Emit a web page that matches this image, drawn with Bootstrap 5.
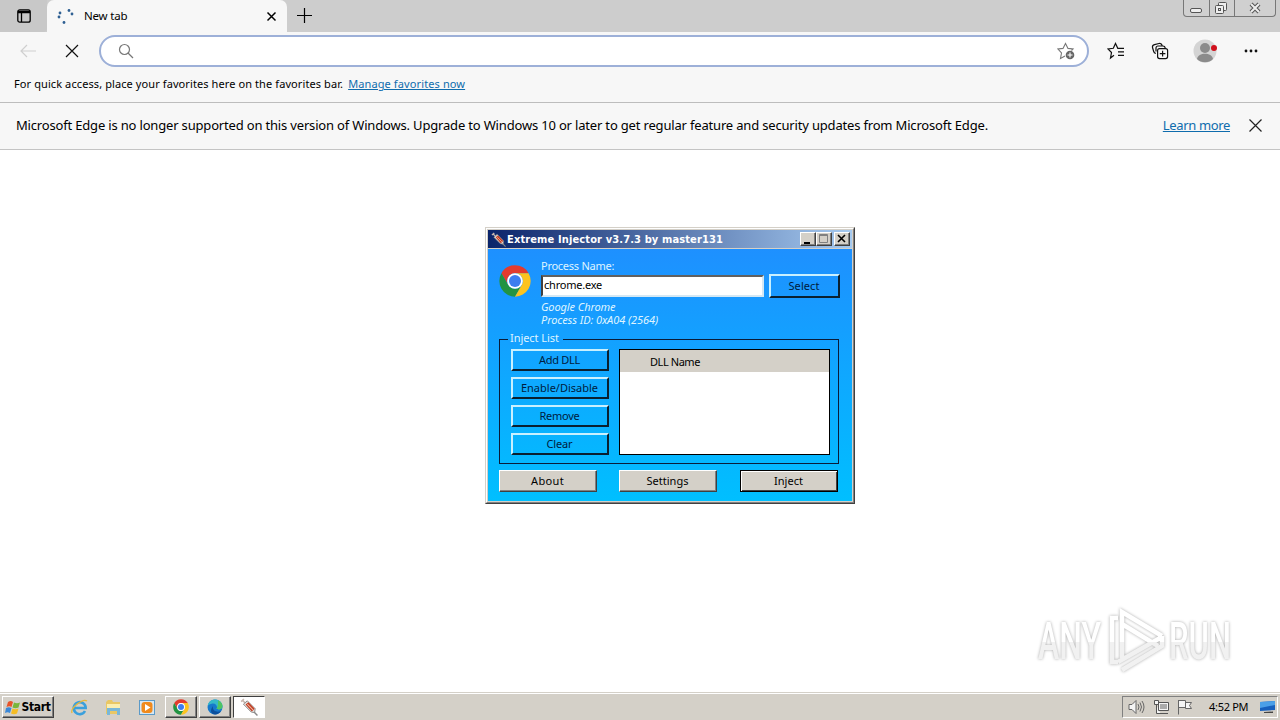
<!DOCTYPE html>
<html lang="en">
<head>
  <meta charset="UTF-8">
  <title>New tab</title>
  <link href="https://cdn.jsdelivr.net/npm/bootstrap@5.3.3/dist/css/bootstrap.min.css" rel="stylesheet">
  <style>
    body { width: 1280px; height: 720px; overflow: hidden; background: #fff; color: #000; font-family: "Noto Sans", sans-serif; font-size: 11px; line-height: 16px; }
    svg { display: block; flex-shrink: 0; }
    span, a { white-space: nowrap; }

    /* browser */
    .tab-strip { height: 32px; background: #cdcdcd; }
    .strip-left { width: 47px; background: #c8c8c8; border-bottom-right-radius: 4px; padding: 9px 0 0 17px; }
    .page-tab { width: 240px; background: #f7f7f7; border-radius: 7px 7px 0 0; padding: 0 10px; }
    .page-tab span { font-size: 11.5px; letter-spacing: -.2px; margin-left: 10px; }
    .new-tab { margin: 8px 0 0 8px; }
    .caption-group { width: 93px; height: 17px; border: 1px solid #777; border-top: 0; border-radius: 0 0 4px 4px; margin-right: 4px; background: #d0d0d0; }
    .caption-group div + div { border-left: 1px solid #777; }
    .tool-row { height: 38px; background: #f7f7f7; padding-left: 19px; }
    .stop-icon { margin-left: 28px; }
    .address { width: 990px; height: 32px; margin-left: 20px; background: #fff; border: 2px solid #9db0d8; border-radius: 16px; padding: 0 12px 0 17px; }
    .tool-icon { margin-left: 26px; }
    .tool-icon.first { margin-left: 18px; }
    .fav-row { height: 33px; background: #f7f7f7; border-bottom: 1px solid #bdbdbd; padding: 6px 14px 0; }
    .fav-row span { letter-spacing: .094px; }
    .fav-row a { letter-spacing: .114px; margin-left: 5px; }
    .edge-link { color: #0f6cad; text-decoration: underline; }
    .notice { height: 47px; background: #f7f7f7; border-bottom: 1px solid #c4c4c4; padding: 0 18px 2px 16px; font-size: 13px; }
    .notice span { letter-spacing: -.175px; }
    .notice a { letter-spacing: -.35px; }
    .notice svg { margin-left: 19px; margin-top: 1px; }

    /* injector window */
    .inj { position: absolute; left: 485px; top: 227px; width: 370px; height: 277px; border: 1px solid; border-color: #d4d0c8 #404040 #404040 #d4d0c8; }
    .inj-frame { height: 100%; border: 1px solid; border-color: #fff #808080 #808080 #fff; padding: 1px; background: #d4d0c8; }
    .inj-title { height: 19px; padding: 0 2px 0 3px; border-bottom: 1px solid #d4d0c8; background: linear-gradient(90deg, #0a246a, #a6caf0); color: #fff; font: bold 11px/18px "DejaVu Sans Condensed", "DejaVu Sans", sans-serif; }
    .inj-title span { letter-spacing: .128px; margin-left: 1px; padding-top: 1px; }
    .inj-body { height: 252px; padding: 9px 12px 0 11px; background: linear-gradient(#1e90ff, #00bfff); color: #dff4ff; }
    .proc-icon { margin-top: 7px; }
    .proc-info { margin-left: 10px; }
    .proc-label { letter-spacing: -.26px; }
    .cap-btn { width: 16px; height: 14px; background: #d4d0c8; border: 1px solid; border-color: #fff #404040 #404040 #fff; box-shadow: inset -1px -1px #808080; }
    .cap-btn.last { margin-left: 2px; }
    .flat-btn { display: flex; align-items: center; justify-content: center; height: 22px; padding: 0 1px 2px 0; background: transparent; border: 2px solid; border-color: #c8f0ff #0a2030 #0a2030 #c8f0ff; border-radius: 0; color: #001c40; font-size: 11px; line-height: 1; }
    .flat-btn + .flat-btn { margin-top: 6px; }
    .select-btn { width: 71px; height: 24px; margin-left: 5px; letter-spacing: .076px; }
    .grey-btn { width: 98px; background: #d4d0c8; color: #000; border-width: 1px; border-color: #fff #404040 #404040 #fff; box-shadow: inset -1px -1px #808080; }
    .grey-btn + .grey-btn { margin: 0 0 0 22px; }
    .grey-btn + .default-btn { border-color: #000; box-shadow: inset 1px 1px #fff, inset -1px -1px #404040; margin-left: 23px; }
    .proc-input { width: 223px; height: 22px; margin-top: 1px; padding: 0 1px; border: 2px solid; border-color: #606060 #d4e8f4 #d4e8f4 #404040; background: #fff; line-height: 16px; letter-spacing: -.22px; color: #000; }
    .proc-note { line-height: 13px; margin-top: 2px; letter-spacing: -.09px; }
    .inj-group { position: relative; height: 125px; margin-top: 13px; width: 340px; border: 1px solid #0a1c38; padding: 9px 8px 0 11px; }
    .inj-legend { position: absolute; left: 8px; top: -10px; padding: 0 4px 0 2px; background: #14a0ff; height: 15px; letter-spacing: -.05px; }
    .btn-column { width: 98px; }
    .dll-list { width: 211px; height: 106px; background: #fff; border: 1px solid #000; color: #000; }
    .dll-head { height: 22px; background: #d4d0c8; padding: 4px 0 0 30px; letter-spacing: -.43px; }
    .inj-actions { margin-top: 6px; }

    /* watermark and taskbar */
    .watermark { position: absolute; left: 1020px; top: 600px; filter: drop-shadow(0 0 1.5px #aaa); }
    .task-row { position: absolute; left: 0; right: 0; bottom: 0; height: 28px; background: #d4d0c8; border-top: 1px solid #d4d0c8; box-shadow: inset 0 1px #fff; padding: 3px 2px 0; }
    .task-btn { width: 32px; height: 22px; margin-left: 2px; border: 1px solid; border-color: #fff #404040 #404040 #fff; box-shadow: inset -1px -1px #808080; display: flex; align-items: center; justify-content: center; }
    .task-btn.start-btn { width: 52px; margin-left: 0; font: bold 12px/20px "DejaVu Sans Condensed", "DejaVu Sans", sans-serif; letter-spacing: -.34px; }
    .task-btn.group-first { margin-left: 9px; }
    .task-btn.pressed { border-color: #404040 #fff #fff #404040; background: #fff; box-shadow: none; }
    .quick-icon { margin: 3px 0 0 17px; }
    .tray { width: 156px; height: 22px; border: 1px solid; border-color: #808080 #fff #fff #808080; padding-left: 5px; }
    .tray span { margin-left: 16px; letter-spacing: -.3px; }
    .tray .desk-icon { margin-left: 12px; }
  </style>
</head>
<body>
  <svg width="0" height="0" class="position-absolute">
    <defs>
      <symbol id="chrome" viewBox="0 0 48 48">
        <path d="M3.6 12.3A23.5 23.5 0 0 1 44.4 12.3H24A11.7 11.7 0 0 0 13.9 30z" fill="#e33b2e"/>
        <path d="M3.6 12.3A23.5 23.5 0 0 0 24 47.5L34.1 29.9A11.7 11.7 0 0 1 13.9 29.9z" fill="#229342"/>
        <path d="M44.4 12.3A23.5 23.5 0 0 1 24 47.5L34.1 29.9A11.7 11.7 0 0 0 24 12.3z" fill="#fcc31e"/>
        <circle cx="24" cy="24" r="11.7" fill="#fff"/>
        <circle cx="24" cy="24" r="9" fill="#3d7df0"/>
      </symbol>
      <symbol id="syringe" viewBox="0 0 16 16">
        <path d="M1 3.2L3.500 1M2.300 2.200l2.500 2.300" stroke="#c9b8b0" stroke-width="1.400"/>
        <path d="M3 5.500L6.500 2.500 13.500 9.500 13 13 10 12.500z" fill="#e4dcd8" stroke="#777" stroke-width=".7"/>
        <path d="M5 5.700L7.500 3.700 13 9.500 10.500 12z" fill="#c23a20"/>
        <path d="M6.500 5.500l5 5" stroke="#f0b8a0" stroke-width=".9"/>
        <path d="M12.500 12.500l3 3" stroke="#888" stroke-width="1.200"/>
      </symbol>
      <linearGradient id="halftone" x1="0" y1="0" x2="0" y2="84" gradientUnits="userSpaceOnUse">
        <stop offset=".5" stop-color="#fff"/>
        <stop offset=".5" stop-color="#f1f1f1"/>
      </linearGradient>
    </defs>
  </svg>

  <div class="tab-strip d-flex">
    <div class="strip-left">
      <svg width="14" height="14" viewBox="0 0 14 14" fill="none" stroke="#000" stroke-width="1.3"><rect x=".8" y=".8" width="12.4" height="12.4" rx="2"/><path d="M1 2.500h12M1 3.500h12M4.500 4v9"/></svg>
    </div>
    <div class="page-tab d-flex align-items-center">
      <svg width="17" height="17" viewBox="0 0 17 17" fill="#2f6093"><circle cx="12" cy="2.500" r="1.400"/><circle cx="15" cy="6" r="1.400"/><circle cx="3" cy="5" r="1.400"/><circle cx="2" cy="9" r="1.400"/><circle cx="7" cy="14.500" r="1.400"/></svg>
      <span>New tab</span>
      <svg class="ms-auto" width="11" height="11" viewBox="0 0 11 11" stroke="#000" stroke-width="1.5"><path d="M1.500 1.500l8 8M9.500 1.500l-8 8"/></svg>
    </div>
    <svg class="new-tab" width="17" height="16" viewBox="0 0 17 16" stroke="#000" stroke-width="1.2"><path d="M2 7.500h15M9.500 0v15"/></svg>
    <div class="caption-group d-flex ms-auto">
      <div><svg width="25" height="16" fill="#eee" stroke="#555"><rect x="6.500" y="8.500" width="11" height="4" rx="1.500"/></svg></div>
      <div><svg width="24" height="16" fill="#eee" stroke="#555"><rect x="8.500" y="2.500" width="8" height="8" rx="1"/><rect x="5.500" y="5.500" width="8" height="8" rx="1"/><rect x="8.500" y="8.500" width="2" height="2"/></svg></div>
      <div><svg width="40" height="16" fill="none"><path d="M16 4l8 8M24 4l-8 8" stroke="#555" stroke-width="4"/><path d="M16 4l8 8M24 4l-8 8" stroke="#eee" stroke-width="2"/></svg></div>
    </div>
  </div>

  <div class="tool-row d-flex align-items-center">
    <svg width="18" height="14" viewBox="0 0 18 14" fill="none" stroke="#cfcfcf" stroke-width="1.2"><path d="M17 7H2M8 1L2 7l6 6"/></svg>
    <svg class="stop-icon" width="14" height="14" viewBox="0 0 14 14" stroke="#111" stroke-width="1.2"><path d="M1 1l12 12M13 1L1 13"/></svg>
    <div class="address d-flex align-items-center justify-content-between">
      <svg width="16" height="16" viewBox="0 0 16 16" fill="none" stroke="#777" stroke-width="1.2"><circle cx="6.500" cy="6.500" r="5"/><path d="M10 10l5 5"/></svg>
      <svg width="18" height="18" viewBox="0 0 18 18" fill="none" stroke="#777" stroke-width="1.1"><path d="M8 14l-4.500 2.500L4.500 11 1 7l5-.6L8.500 1.500 11 6.400l5 .6-1.500 1.500"/><circle cx="13" cy="13" r="4.300" fill="#666" stroke="none"/><path d="M13 10.500v5M10.500 13h5" stroke="#fff"/></svg>
    </div>
    <svg class="tool-icon first" width="18" height="18" viewBox="0 0 18 18" fill="none" stroke="#111" stroke-width="1.2"><path d="M7 13.300L3.500 16l1-5.500L1 7l5.300-.7L8.500 1.500l2.300 4.800H17M11 9.800h6M11 13.300h6"/></svg>
    <svg class="tool-icon" width="18" height="18" viewBox="0 0 18 18" fill="none" stroke="#111" stroke-width="1.2"><rect x="6.600" y="6.600" width="10" height="10" rx="2"/><path d="M11.600 8.800v5.600M8.800 11.600h5.600M4.800 11.500C3.500 11 3 10.500 2.700 9.500L1.500 5.500C1.200 4 2 3 3.500 2.600L8 1.500c1.800-.4 2.700.3 3.200 2M5 9.500V6c0-1.200.8-2 2-2h5c1.300 0 2 .8 2.300 2"/></svg>
    <svg class="tool-icon ms-4" width="24" height="24" viewBox="0 0 24 24"><circle cx="12" cy="12" r="11.500" fill="#d4d4d4"/><circle cx="12" cy="9" r="5" fill="#8b8b8b"/><path d="M4 20c1-7 15-7 16 0a11.500 11.500 0 0 1-16 0z" fill="#8b8b8b"/><circle cx="21" cy="9" r="3" fill="#d0101c"/></svg>
    <svg class="tool-icon" width="16" height="4" fill="#111"><circle cx="3" cy="2" r="1.400"/><circle cx="8" cy="2" r="1.400"/><circle cx="13" cy="2" r="1.400"/></svg>
  </div>
  <div class="fav-row d-flex">
    <span>For quick access, place your favorites here on the favorites bar.</span>
    <a class="edge-link" href="#">Manage favorites now</a>
  </div>
  <div class="notice d-flex align-items-center">
    <span>Microsoft Edge is no longer supported on this version of Windows. Upgrade to Windows 10 or later to get regular feature and security updates from Microsoft Edge.</span>
    <a class="edge-link ms-auto" href="#">Learn more</a>
    <svg width="13" height="13" viewBox="0 0 13 13" stroke="#222" stroke-width="1.2"><path d="M.5.5l12 12M12.500.5l-12 12"/></svg>
  </div>

  <div class="inj">
    <div class="inj-frame">
      <div class="inj-title d-flex align-items-center">
        <svg width="15" height="15"><use href="#syringe"/></svg>
        <span>Extreme Injector v3.7.3 by master131</span>
        <div class="cap-btn ms-auto"><svg width="14" height="12"><path d="M3 9h6v2H3z"/></svg></div>
        <div class="cap-btn"><svg width="14" height="12" fill="none" stroke="#808080"><path d="M2.500 1.500h8v8h-8zM2 2.500h9"/></svg></div>
        <div class="cap-btn last"><svg width="14" height="12" stroke="#000" stroke-width="1.6"><path d="M3 2l7 7M10 2L3 9"/></svg></div>
      </div>
      <div class="inj-body">
        <div class="d-flex">
          <svg class="proc-icon" width="32" height="32"><use href="#chrome"/></svg>
          <div class="proc-info">
            <div class="proc-label">Process Name:</div>
            <div class="d-flex">
              <div class="proc-input">chrome.exe</div>
              <div class="flat-btn select-btn">Select</div>
            </div>
            <div class="proc-note fst-italic">Google Chrome<br>Process ID: 0xA04 (2564)</div>
          </div>
        </div>
        <div class="inj-group d-flex justify-content-between">
          <span class="inj-legend">Inject List</span>
          <div class="btn-column">
            <div class="flat-btn" style="letter-spacing:-.28px">Add DLL</div>
            <div class="flat-btn">Enable/Disable</div>
            <div class="flat-btn" style="letter-spacing:-.26px">Remove</div>
            <div class="flat-btn" style="letter-spacing:-.14px">Clear</div>
          </div>
          <div class="dll-list"><div class="dll-head">DLL Name</div></div>
        </div>
        <div class="inj-actions d-flex">
          <div class="flat-btn grey-btn" style="letter-spacing:.35px">About</div>
          <div class="flat-btn grey-btn">Settings</div>
          <div class="flat-btn grey-btn default-btn">Inject</div>
        </div>
      </div>
    </div>
  </div>

  <svg class="watermark" width="240" height="84">
    <g fill="url(#halftone)" font-family="Roboto, sans-serif" font-size="52" font-weight="500">
      <text x="18" y="59" textLength="63" lengthAdjust="spacingAndGlyphs">ANY</text>
      <text x="149" y="59" textLength="62" lengthAdjust="spacingAndGlyphs">RUN</text>
    </g>
    <g fill="none" stroke="url(#halftone)" stroke-width="4.500">
      <path d="M102 58V12L142 36M98 18h-6v44h6M102 24l36 22M102 70l40-24V36M98 62l42-24"/>
    </g>
  </svg>

  <div class="task-row d-flex">
    <div class="task-btn start-btn">
      <svg width="16" height="15" viewBox="0 0 16 15"><path d="M3 2c2-1.500 3.500-1.500 5 0L6.500 7C5 6 3.500 6 1.500 7z" fill="#e8542a"/><path d="M9 2.500c2 1 4 1 6 0l-1.500 5c-2 1-4 1-6 0z" fill="#79b63a"/><path d="M1 8c2-1 3.500-1 5.500 0L5 13c-2-1-3-1-5 0z" fill="#3a88d8"/><path d="M7.500 8.500c2 1 4 1 6 0l-1.500 5c-2 1-4 1-6 0z" fill="#f5bd25"/></svg>
      <span>Start</span>
    </div>
    <svg class="quick-icon" width="17" height="17" viewBox="0 0 17 17" fill="none"><path d="M14 12a6 6 0 1 1 .7-3H3" stroke="#3ba0dc" stroke-width="2.6"/><path d="M1 14C-1 9 12-1 16 2" stroke="#e8b83a" stroke-width="1.3"/></svg>
    <svg class="quick-icon" width="17" height="17" viewBox="0 0 17 17"><path d="M1 3l2-2h4l1 2h7v12H1z" fill="#e9c765"/><path d="M2 5h13v4H2z" fill="#fbeeb0"/><path d="M2 9h13v7h-3v-4H5v4H2z" fill="#79b7d9"/></svg>
    <svg class="quick-icon" width="17" height="17" viewBox="0 0 17 17"><rect x=".5" y="1.500" width="15" height="14" fill="#d7e7f2" stroke="#5b9ac8"/><rect x="2.500" y="3" width="11" height="11" rx="3" fill="#f08a1d"/><path d="M6 5l5.500 3.500L6 12z" fill="#fff"/></svg>
    <div class="task-btn group-first"><svg width="16" height="16"><use href="#chrome"/></svg></div>
    <div class="task-btn"><svg width="16" height="16" viewBox="0 0 16 16"><circle cx="8" cy="8" r="7.500" fill="#1678cc"/><path d="M.7 7C2-2 15-1 15.500 7c0 4-5 4-6 2.500C11 8 9 4 5.500 4.500 3 5 1.300 6 .7 7z" fill="#35b8c8"/><path d="M11 1.500c3 1 4.500 3.500 4.500 5.500 0 4-5 4-6 2.500C11.500 8 11 5 11 1.500z" fill="#4fc463"/><path d="M6 7c-1 4 3 7 8 5-3 5-10 4-10 0 0-2 1-4 2-5z" fill="#0c4f9c"/></svg></div>
    <div class="task-btn pressed"><svg width="18" height="18"><use href="#syringe"/></svg></div>
    <div class="tray d-flex align-items-center ms-auto">
      <svg width="17" height="16" viewBox="0 0 17 16" fill="#f4f4f4" stroke="#666"><path d="M1 5.500h3l4-4v13l-4-4H1z"/><path d="M10 5q2 3 0 6M12 3.500q3 4.500 0 9M14 2q4 6 0 12" fill="none"/></svg>
      <svg class="ms-2" width="16" height="16" viewBox="0 0 16 16" fill="#f4f4f4" stroke="#555"><path d="M5.500 3.500h10v8h-10zM7 14.500h8M1.500 1.500h4v4h-4zM3.500 6v8.500h4"/><path d="M7 5h7v5H7z" fill="#aaa" stroke="none"/></svg>
      <svg class="ms-2" width="16" height="16" viewBox="0 0 16 16" fill="#f4f4f4" stroke="#666"><path d="M1.500 1v14.500M1.500 1.500h7v7h-7M8.500 3.500h6l-2 3 2 3h-6z"/></svg>
      <span>4:52 PM</span>
      <svg class="desk-icon" width="16" height="16" viewBox="0 0 16 16"><path d="M0 3l15-1v9L0 12z" fill="#175fbd"/><path d="M0 3l15-1v4L0 9z" fill="#4b9fe8"/><path d="M4 13l9-.5v1.500H4z" fill="#444"/></svg>
    </div>
  </div>

  <script src="https://cdn.jsdelivr.net/npm/bootstrap@5.3.3/dist/js/bootstrap.bundle.min.js"></script>
</body>
</html>
